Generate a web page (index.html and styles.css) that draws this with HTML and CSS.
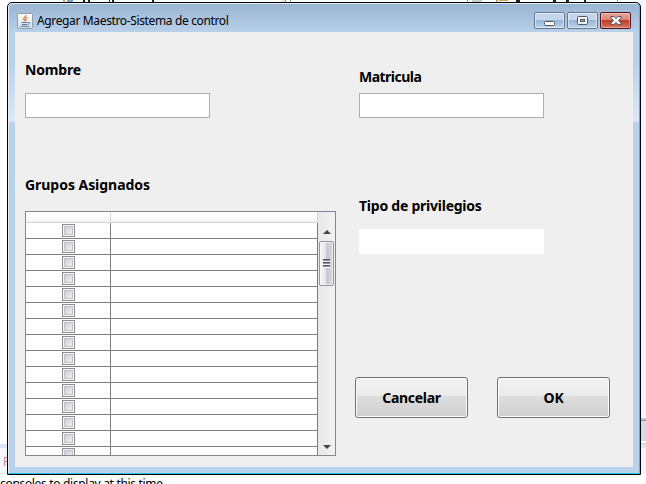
FILE: index.html
```html
<!DOCTYPE html>
<html lang="es">
<head>
<meta charset="utf-8">
<title>Agregar Maestro-Sistema de control</title>
<link rel="stylesheet" href="styles.css">
</head>
<body>
<div class="desktop">
  <svg class="backdrop" width="646" height="484" viewBox="0 0 646 484" shape-rendering="crispEdges">
    <rect width="646" height="484" fill="#fff"/>
    <rect x="640" width="6" height="474" fill="#f4f5fc"/>
    <path fill="#c9a35c" d="M63 0h2v2h-2z"/><path fill="#7d9fc5" d="M67 0h6v2h-6z"/>
    <path fill="#222" d="M83 0h2v2h-2zM88 0h2v2h-2zM109 0h1v2h-1zM112 0h2v2h-2zM152 0h2v2h-2zM516 0h4v2h-4zM553 0h3v2h-3zM566 0h3v2h-3zM584 0h2v2h-2z"/>
    <path fill="#dfe5f3" d="M281 0h4v2h-4z"/><path fill="#999" d="M285 0h1v2h-1zM290 0h1v2h-1zM467 0h1v2h-1zM617 0h1v2h-1z"/>
    <path fill="#ccc" d="M472 0h10v2h-10z"/><path fill="#d3a04c" d="M496 0h2v2h-2zM499 0h9v1h-9z"/>
    <path fill="#dfe3f4" d="M0 444h8v4H0z"/><path fill="#f5f5fc" d="M0 448h8v26H0z"/>
    <path fill="#b9c6da" d="M640 418h6v2h-6z"/><path fill="#909399" d="M640 420h6v1h-6z"/><path fill="#cddcec" d="M640 421h6v20h-6z"/>
    <path fill="#fff" d="M640 441h6v7h-6z"/><path fill="#c9c9d5" d="M640 443h6v1h-6z"/><path fill="#dfe3f4" d="M640 444h6v4h-6z"/>
  </svg>
  <div class="behind tab">P</div>
  <div class="behind console">consoles to display at this time.</div>

  <main class="window">
    <header class="titlebar">
      <svg class="java" width="16" height="16" viewBox="0 0 16 16">
        <defs><linearGradient id="tile" x2="0" y2="1"><stop stop-color="#fff"/><stop offset="1" stop-color="#d5dbe1"/></linearGradient></defs>
        <rect x=".5" y=".5" width="15" height="15" rx="1" fill="url(#tile)" stroke="#909dab"/>
        <path d="M8.800 2c.7 2-3 2.700-2 4.500L7.800 8M10.500 4.500C8.500 5.500 8 6.500 9 8" fill="none" stroke="#e5772e" stroke-width="1.300"/>
        <path d="M4.500 9.500h6M5 11.500h5M3.500 13.300h8.500M11 9.500c2.500-.5 2.200 1.700 0 2" fill="none" stroke="#55799e"/>
      </svg>
      <h1>Agregar Maestro-Sistema de control</h1>
      <div class="controls">
        <button class="control" aria-label="Minimizar"><svg width="11" height="13"><rect x=".5" y="7.500" width="10" height="4" rx="1" fill="#fff" stroke="#535666"/></svg></button>
        <button class="control" aria-label="Maximizar"><svg width="11" height="13"><rect x=".5" y="2.500" width="10" height="8" rx="1" fill="#f4f4f4" stroke="#535666"/><rect x="3.500" y="5.500" width="4" height="2" fill="#8db1d5" stroke="#535666"/></svg></button>
        <button class="control close" aria-label="Cerrar"><svg width="12" height="13"><path d="M1 2.500h3l2 2 2-2h3v1.500L8.500 6.500l2.500 2.500v1.500H8l-2-2-2 2H1V9l2.500-2.500L1 4z" fill="#f5f5f5" stroke="#535666"/></svg></button>
      </div>
    </header>
    <div class="content">
      <section class="left">
        <label class="label nombre">Nombre</label>
        <div class="field first"></div>
        <h2 class="label groups">Grupos Asignados</h2>
        <div class="table">
          <div class="grid">
            <div class="head"><span></span><span></span></div>
            <div class="row"><i></i></div><div class="row"><i></i></div><div class="row"><i></i></div><div class="row"><i></i></div><div class="row"><i></i></div>
            <div class="row"><i></i></div><div class="row"><i></i></div><div class="row"><i></i></div><div class="row"><i></i></div><div class="row"><i></i></div>
            <div class="row"><i></i></div><div class="row"><i></i></div><div class="row"><i></i></div><div class="row"><i></i></div><div class="row"><i></i></div>
          </div>
          <div class="scroll">
            <svg class="arrow" width="8" height="4"><path d="M0 4l4-4 4 4z" fill="#444"/></svg>
            <div class="thumb"><b></b><b></b><b></b></div>
            <svg class="arrow down" width="8" height="4"><path d="M0 0h8L4 4z" fill="#444"/></svg>
          </div>
        </div>
      </section>
      <section class="right">
        <label class="label matricula">Matricula</label>
        <div class="field"></div>
        <label class="label tipo">Tipo de privilegios</label>
        <div class="field plain"></div>
        <div class="actions"><button class="button">Cancelar</button><button class="button">OK</button></div>
      </section>
    </div>
  </main>
</div>
</body>
</html>
```
FILE: styles.css
```css
* { box-sizing: border-box; }
body { margin: 0; font-family: "Noto Sans", sans-serif; color: #000; }
.desktop { position: relative; width: 646px; height: 484px; overflow: hidden; }
.backdrop { position: absolute; left: 0; top: 0; }
.behind { position: absolute; white-space: nowrap; line-height: 16px; }
.tab { left: 3px; top: 454px; font-size: 12px; color: #b58ca5; }
.console { left: 0; top: 476px; font-size: 12px; letter-spacing: -.32px; }

.window {
  position: absolute; left: 7px; top: 2px; width: 634px; height: 473px;
  padding: 0 7px 7px; border: 1px solid #000; border-radius: 5px 5px 0 0;
  background: linear-gradient(#99b4d1, #b9d1ea 30px, #b9d1ea 60px, #dce9f7 118px, #b9d1ea 120px);
  box-shadow: inset -1px -1px #2cc4e8, inset 1px 1px #e4eef8;
}
.titlebar { display: flex; height: 29px; padding: 0 2px; }
.java { margin: 10px 4px 0 0; }
h1 { margin: 9px 0 0; font-size: 12px; font-weight: 400; line-height: 17px; letter-spacing: -.36px; white-space: nowrap; }
.controls { display: flex; gap: 2px; margin: 9px 0 0 auto; }
.control {
  display: grid; place-items: center; width: 31px; height: 17px; padding: 0;
  border: 1px solid #667990; border-radius: 2px;
  background: linear-gradient(#c3d6eb 0 45%, #98b3d0 46%, #b9d4ec);
  box-shadow: inset 0 0 0 1px #ffffff80;
}
.close { border-color: #4c1422; background: linear-gradient(#e7a59c, #db8375 45%, #b83a23 46%, #d6745c); box-shadow: inset 0 0 0 1px #ffffff60; }
.content { display: flex; height: 435px; background: #efefef; padding-left: 10px; }
.left { width: 334px; padding-top: 27px; }
.right { flex: 1; padding-top: 34px; }
.label { display: block; margin: 0; font-size: 14px; font-weight: 700; line-height: 22px; letter-spacing: -.24px; }
.nombre { letter-spacing: -.15px; }
.matricula { letter-spacing: -.52px; }
.field { width: 185px; height: 25px; margin-top: 5px; border: 1px solid #abadb3; background: #fff; }
.first { margin-top: 12px; }
.groups { margin-top: 56px; letter-spacing: -.04px; }
.table { display: flex; width: 311px; height: 245px; margin-top: 15px; border: 1px solid #828790; }
.grid { width: 292px; overflow: hidden; background: #fff; }
.head { display: grid; grid-template-columns: 85px 1fr; height: 11px; }
.head span { border-right: 1px solid #d9dadd; border-bottom: 1px solid #d5d5d5; background: linear-gradient(#fff 40%, #f1f2f4); }
.row { display: flex; height: 16px; border-right: 1px solid #7b7b7f; border-bottom: 1px solid #808080; background: linear-gradient(#808080, #808080) 84px 0 / 1px 100% no-repeat; }
.row i { width: 13px; height: 13px; margin: 1px 0 0 36px; border: 1px solid #8e8f8f; background: linear-gradient(135deg, #c0c6ce, #f8f8f8); box-shadow: inset 0 0 0 1px #f4f4f4, inset 0 0 0 2px #c0c4ca; }
.scroll { display: flex; flex: 1; flex-direction: column; align-items: center; background: linear-gradient(90deg, #e8e8e8, #f2f2f2); }
.arrow { margin-top: 18px; }
.thumb { display: flex; flex-direction: column; justify-content: center; align-items: center; width: 15px; height: 45px; margin-top: 7px; border: 1px solid #979797; border-radius: 2px; background: linear-gradient(90deg, #f5f5f5, #e5e5e7 45%, #c9c9cd 50%, #d8d8dc); box-shadow: inset 0 0 0 1px #fff8; }
.thumb b { width: 7px; height: 3px; border: solid #f8f8f8; border-width: 0 0 1px; background: linear-gradient(#55555c 50%, #909098 50%); }
.down { margin: auto 0 6px; }
.tipo { margin-top: 77px; }
.plain { margin-top: 12px; border: 0; }
.actions { display: flex; gap: 29px; margin: 123px 0 0 -4px; }
.button { width: 113px; height: 41px; padding: 0; border: 1px solid #707070; border-radius: 3px; background: linear-gradient(#f2f2f2, #ebebeb 46%, #dddddd 47%, #cfcfcf); box-shadow: inset 0 0 0 1px #fcfcfc; color: #000; font: 700 14px/20px "Noto Sans", sans-serif; letter-spacing: -.3px; }
```
